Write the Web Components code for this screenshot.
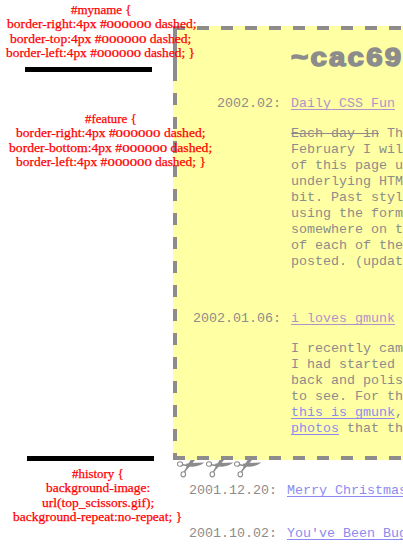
<!DOCTYPE html>
<html lang="en">
<head>
<meta charset="utf-8">
<title>~cac69</title>
<style>
html,body{margin:0;background:#fff;overflow:hidden}
body{height:545px}
</style>
</head>
<body>
<annotated-page></annotated-page>
<script>
const define = (name, html, setup) => customElements.define(name, class extends HTMLElement {
  constructor() {
    super();
    this.attachShadow({mode: 'open'}).innerHTML = html;
  }
  connectedCallback() { if (setup) setup(this); }
});

// One line of a note, stretched to the width given in its "w" attribute.
define('note-line', `<style>
:host{display:block;height:14.4px;white-space:pre;margin-left:var(--x);font:13.4px/14.4px "Liberation Serif",serif;color:#f00;-webkit-text-stroke:.25px #f00}
span{display:inline-block;transform-origin:0 50%}
i{display:inline-block;font-style:normal;width:44px;height:14.4px;vertical-align:top}
b{display:inline-block;font-weight:400;transform:scale(1.1,.74);transform-origin:0 11.5px}
</style><span></span>`, el => {
  const s = el.shadowRoot.querySelector('span');
  s.innerHTML = el.textContent.replace('000000', '<i><b>000000</b></i>');
  el.style.setProperty('--x', el.getAttribute('x') + 'px');
  s.style.transform = `scaleX(${el.getAttribute('w') / s.offsetWidth})`;
});

define('css-note', `<style>:host{display:block}</style><slot></slot>`);

define('black-bar', `<style>:host{display:block;width:127px;height:5px;background:#000}</style>`);

define('scissor-icon', `<style>:host{display:block;width:28px;height:18px}svg{display:block}</style>
<svg width="28" height="18" viewBox="0 0 28 18" fill="none" stroke="#8c8c8c">
<ellipse cx="3" cy="4" rx="2.6" ry="2.3" stroke-width="1.1"/>
<ellipse cx="6.3" cy="14.3" rx="2.3" ry="2.6" stroke-width="1.1"/>
<path d="M5.4 4.8L10 5.5M7.4 11.9L11 6.5" stroke-width="1.6"/>
<path d="M9 3.8L14 3L27.5 2.6Q22 6.4 16 6.7L9.5 6.6Z" fill="#8c8c8c" stroke="none"/>
<path d="M9.2 7.3L13.6 0H18L13.6 5.4L10.4 9Z" fill="#8c8c8c" stroke="none"/>
</svg>`);

define('journal-entry', `<style>
:host{display:flex;font:13.333px/16px "Liberation Mono","Courier New",monospace;color:#8c8c8c;white-space:pre}
.date{flex:none;width:var(--date,108px);text-align:right}
.main{margin-left:var(--gap,10px)}
.title{color:var(--link,#b292c8);text-decoration:underline;text-underline-offset:1.5px;text-decoration-thickness:1px;text-decoration-skip-ink:none}
.body{margin-top:14px}
</style><div class="date"><slot name="date"></slot></div><div class="main"><div class="title"><slot name="title"></slot></div><div class="body"><slot></slot></div></div>`);

define('dashed-sheet', `<style>
:host{display:block;box-sizing:border-box;height:434px;overflow:hidden;padding:16px 0 0;
background:
linear-gradient(#8c8c8c,#8c8c8c) 0 0/4px 55px no-repeat,
repeating-linear-gradient(90deg,#8c8c8c 0 12px,transparent 12px 24px) 0 0/100% 4px no-repeat,
repeating-linear-gradient(90deg,#8c8c8c 0 12px,transparent 12px 24px) 0 100%/100% 4px no-repeat,
repeating-linear-gradient(#8c8c8c 0 12px,transparent 12px 24px) 0 -5px/4px 439px no-repeat,
#ffffa3}
</style><slot></slot>`);

define('site-title', `<style>:host{display:block;height:30px;margin-left:118px;white-space:pre;font:bold 26px/30px "Liberation Sans",sans-serif;color:#8c8c8c;-webkit-text-stroke:1.5px #8c8c8c;letter-spacing:2px}span{display:inline-block;transform:scaleX(1.13);transform-origin:0 0}</style><span><slot></slot></span>`);

define('annotated-page', `<style>
:host{display:block;position:relative;width:403px;height:545px;overflow:hidden}
.site{padding:26px 0 0 173px}
.cut{display:flex;gap:.7px;margin-left:4px;height:23px}
.first{margin-top:24px}
.second{margin-top:41px}
.old{--date:104px;--gap:10px;--link:#8c8cf0}
.old + .old{margin-top:13px}
a{color:#8c8cf0;text-decoration:underline;text-underline-offset:1.5px;text-decoration-thickness:1px;text-decoration-skip-ink:none}
.notes{position:absolute;inset:0 auto auto 0;width:215px}
</style>
<div class="site">
<dashed-sheet>
<site-title>~cac69</site-title>
<journal-entry class="first"><span slot="date">2002.02:</span><span slot="title">Daily CSS Fun</span><s>Each day in</s> Th
February I wil
of this page u
underlying HTM
bit. Past styl
using the form
somewhere on t
of each of the
posted. (updat</journal-entry>
<journal-entry class="second"><span slot="date">2002.01.06:</span><span slot="title">i loves gmunk</span>I recently cam
I had started 
back and polis
to see. For th
<a>this is gmunk</a>,
<a>photos</a> that th</journal-entry>
</dashed-sheet>
<div class="cut"><scissor-icon></scissor-icon><scissor-icon></scissor-icon><scissor-icon></scissor-icon></div>
<journal-entry class="old"><span slot="date">2001.12.20:</span><span slot="title">Merry Christmas</span></journal-entry>
<journal-entry class="old"><span slot="date">2001.10.02:</span><span slot="title">You've Been Bug</span></journal-entry>
</div>
<div class="notes">
<css-note style="padding-top:3px"><note-line x="71" w="61">#myname {</note-line><note-line x="7" w="190">border-right:4px #000000 dashed;</note-line><note-line x="10" w="181">border-top:4px #000000 dashed;</note-line><note-line x="6" w="189">border-left:4px #000000 dashed; }</note-line></css-note>
<black-bar style="margin:6.4px 0 0 25px"></black-bar>
<css-note style="padding-top:40px"><note-line x="85" w="52">#feature {</note-line><note-line x="16" w="190">border-right:4px #000000 dashed;</note-line><note-line x="9" w="203">border-bottom:4px #000000 dashed;</note-line><note-line x="16" w="190">border-left:4px #000000 dashed; }</note-line></css-note>
<black-bar style="margin:286.4px 0 0 27px"></black-bar>
<css-note style="padding-top:6px"><note-line x="72" w="52">#history {</note-line><note-line x="46" w="104">background-image:</note-line><note-line x="42" w="112">url(top_scissors.gif);</note-line><note-line x="13" w="169">background-repeat:no-repeat; }</note-line></css-note>
</div>`);
</script>
</body>
</html>
